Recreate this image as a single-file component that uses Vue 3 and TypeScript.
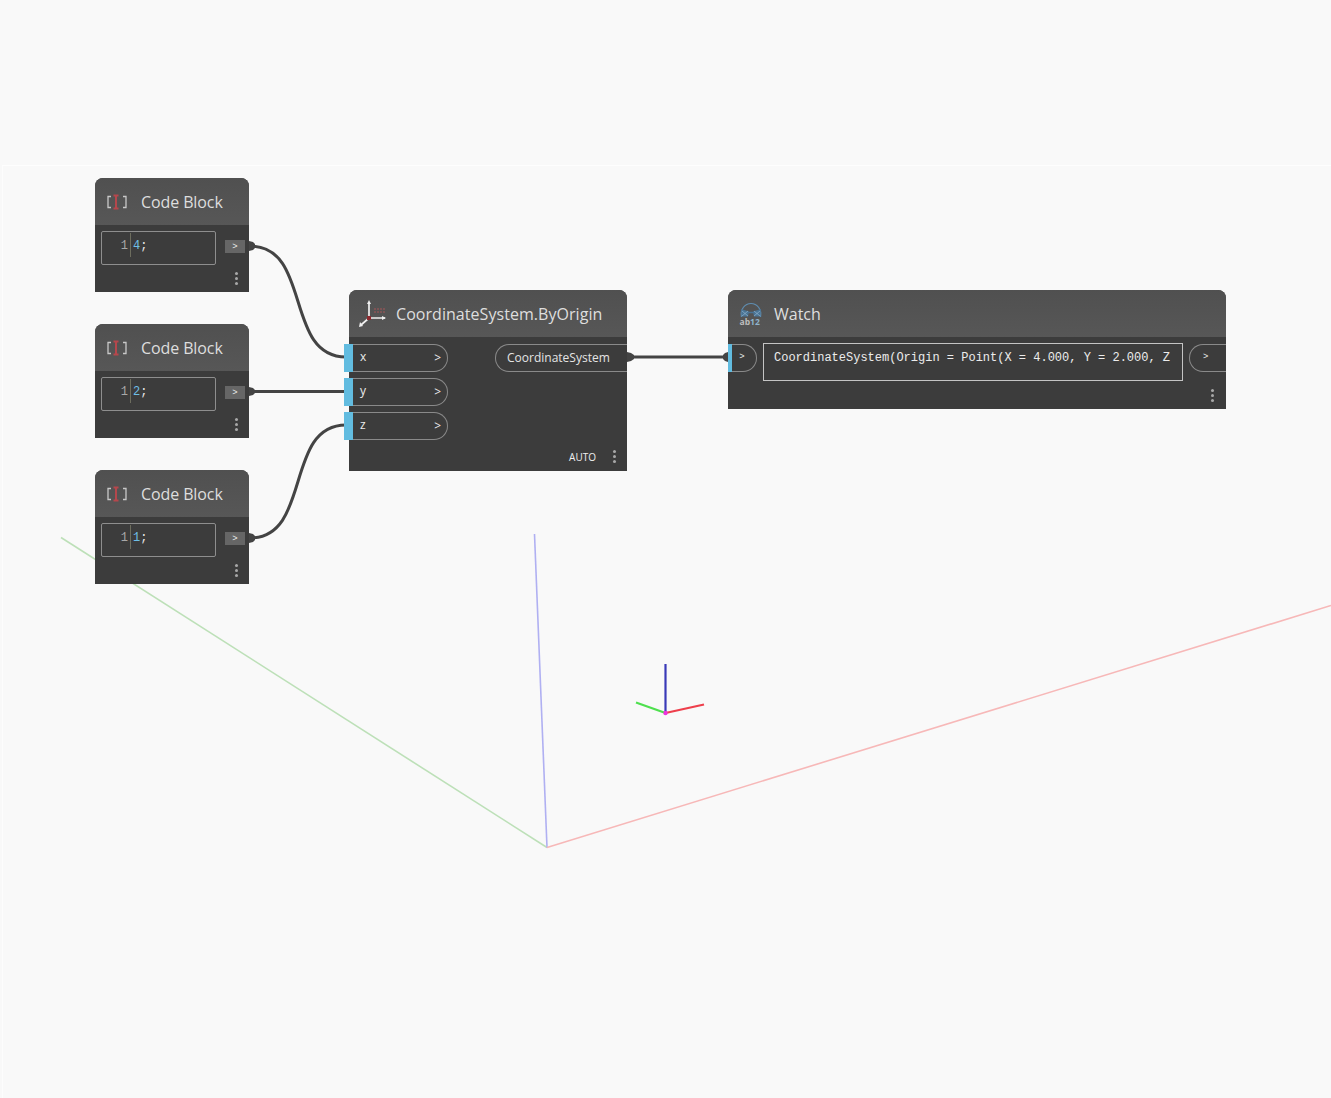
<script setup lang="ts">
interface CodeNode { id: number; top: number; value: string }
const codeNodes: CodeNode[] = [
  { id: 1, top: 178, value: '4' },
  { id: 2, top: 324, value: '2' },
  { id: 3, top: 470, value: '1' },
]
const inputs: string[] = ['x', 'y', 'z']
const watchText = 'CoordinateSystem(Origin = Point(X = 4.000, Y = 2.000, Z'
</script>

<template>
  <div class="canvas">
    <div class="top-band"></div>
    <svg class="scene" width="1331" height="1098" viewBox="0 0 1331 1098">
      <line x1="61" y1="537.500" x2="547" y2="847.500" stroke="#bde0b8" stroke-width="1.600" />
      <line x1="534.500" y1="534" x2="547" y2="847.500" stroke="#b0b0f2" stroke-width="1.600" />
      <line x1="547" y1="847.500" x2="1331" y2="605.500" stroke="#f7b8b8" stroke-width="1.600" />
      <line x1="665.500" y1="713" x2="665.500" y2="664" stroke="#3a3ab8" stroke-width="2.200" />
      <line x1="665.500" y1="713" x2="704" y2="704.500" stroke="#ee3f4c" stroke-width="2.200" />
      <line x1="665.500" y1="713" x2="636" y2="702.500" stroke="#4fe04f" stroke-width="2.200" />
      <circle cx="665.500" cy="713" r="2.200" fill="#ee33dd" />
    </svg>

    <svg class="wires" width="1331" height="1098" viewBox="0 0 1331 1098">
      <g fill="none" stroke="#444" stroke-width="3">
        <path d="M250 246 C312 246 284 357 346 357" />
        <path d="M250 391.500 L346 391.500" />
        <path d="M250 538 C312 538 284 425 346 425" />
        <path d="M628 357 L728 357" />
      </g>
      <g fill="#444">
        <path d="M249 241 L253 242 L255 244 V248 L253 250 L249 251 Z" />
        <path d="M249 387 L253 388 L255 390 V393 L253 395 L249 396 Z" />
        <path d="M249 533 L253 534 L255 536 V540 L253 542 L249 543 Z" />
        <path d="M627 352 L631 353 L634 355 V359 L631 361 L627 362 Z" />
        <path d="M728 352 L725 353 L723 355 V359 L725 361 L728 362 Z" />
      </g>
    </svg>

    <section v-for="n in codeNodes" :key="n.id" class="node code-node" :style="{ top: n.top + 'px' }">
      <header class="head code-head">
        <svg class="code-icon" width="22" height="16" viewBox="0 0 22 16">
          <path d="M5 2.500H2V13.500H5M17 2.500H20V13.500H17" fill="none" stroke="#c8c8c8" stroke-width="1.300" />
          <path d="M7.500 1.500H12.500M10 1.500V14.500M7.500 14.500H12.500" fill="none" stroke="#b5474c" stroke-width="2" />
        </svg>
        <span class="title code-title">Code Block</span>
      </header>
      <div class="code-body">
        <div class="editor">
          <span class="line-no">1</span>
          <span class="gutter"></span>
          <span class="code"><span class="num">{{ n.value }}</span>;</span>
        </div>
        <span class="out-port">&gt;</span>
      </div>
      <footer class="foot code-foot"><i class="dots"></i></footer>
    </section>

    <section class="node main-node">
      <header class="head main-head">
        <svg class="axis-icon" width="28" height="30" viewBox="0 0 28 30">
          <path d="M10 3V19M10 19H26M10 19L2 26" fill="none" stroke="#f0f0f0" stroke-width="1.700" />
          <path d="M8 5L10 1L12 5ZM23 17L27 19L23 21ZM1 23L4 27L0 28Z" fill="#f0f0f0" />
          <rect x="8" y="17" width="4" height="4" fill="#8c2a30" />
          <path d="M15 10H26M15 13H26" stroke="#8a5557" stroke-width="1.500" stroke-dasharray="2 1" />
        </svg>
        <span class="title main-title">CoordinateSystem.ByOrigin</span>
      </header>
      <div class="main-body">
        <div class="inputs">
          <div v-for="name in inputs" :key="name" class="in-port">
            <i class="blue"></i>
            <span class="port-name">{{ name }}</span>
            <span class="chev">&gt;</span>
          </div>
        </div>
        <div class="out-pill">CoordinateSystem</div>
      </div>
      <footer class="foot main-foot"><span class="auto">AUTO</span><i class="dots"></i></footer>
    </section>

    <section class="node watch-node">
      <header class="head watch-head">
        <svg class="watch-icon" width="24" height="24" viewBox="0 0 24 24">
          <path d="M2.500 15C1 7 6 1.500 12 1.500S23 7 21.500 15" fill="none" stroke="#5f8db0" stroke-width="1.200" />
          <path d="M2 7L10 9.500L9 14.500H3ZM22 7L14 9.500L15 14.500H21Z" fill="#4a7394" />
          <path d="M3 9L9 14M9 9L3 14M15 9L21 14M21 9L15 14" stroke="#8fb3cd" stroke-width="0.700" />
          <path d="M9 10.500H15" stroke="#4a7394" stroke-width="1.500" />
          <text x="0.500" y="23" class="ab">ab<tspan fill="#8fb3cd">12</tspan></text>
        </svg>
        <span class="title">Watch</span>
      </header>
      <div class="watch-body">
        <div class="watch-in"><i class="watch-blue"></i><span>&gt;</span></div>
        <div class="watch-box">{{ watchText }}</div>
        <div class="watch-out">&gt;</div>
      </div>
      <footer class="foot watch-foot"><i class="dots"></i></footer>
    </section>
  </div>
</template>

<style scoped>
.canvas {
  position: relative;
  width: 1331px;
  height: 1098px;
  overflow: hidden;
  background: #f9f9f9;
  font-family: "Open Sans", "Noto Sans", sans-serif;
}
.top-band {
  position: absolute;
  left: 2px;
  right: 0;
  top: 165px;
  bottom: 0;
  border-top: 1px solid #fefefe;
  border-left: 1px solid #fdfdfd;
}
.scene, .wires { position: absolute; left: 0; top: 0; }
.node {
  position: absolute;
  display: flex;
  flex-direction: column;
  background: #3c3c3c;
  border-radius: 8px 8px 0 0;
}
.head {
  display: flex;
  align-items: center;
  height: 47px;
  flex: none;
  background: linear-gradient(#505050, #575757);
  border-radius: 8px 8px 0 0;
}
.title { color: #dedede; font-size: 16px; white-space: nowrap; }
.code-title { letter-spacing: -0.100px; }
.main-title { letter-spacing: 0.050px; margin-left: 1px; }
.code-node { left: 95px; width: 154px; height: 114px; }
.code-head { padding-left: 11px; }
.code-icon { margin-right: 13px; flex: none; }
.code-body {
  display: flex;
  align-items: flex-start;
  padding: 6px 4px 0 6px;
  height: 40px;
}
.editor {
  display: flex;
  width: 115px;
  height: 34px;
  box-sizing: border-box;
  border: 1px solid #8e8e8e;
  border-radius: 2px;
  font: 12px/28px "Liberation Mono", monospace;
}
.line-no { width: 26px; text-align: right; color: #a8a8a8; }
.gutter { width: 1px; height: 24px; margin: 1px 2px 0 2px; background: #6d6d5e; }
.code { color: #e8e8e8; }
.num { color: #6fbfe6; }
.out-port {
  width: 20px;
  height: 13px;
  margin: 9px 0 0 9px;
  background: #666;
  color: #ececec;
  font: 9px/15px "Liberation Mono", monospace;
  text-align: center;
}
.foot { display: flex; justify-content: flex-end; align-items: center; flex: 1; }
.dots {
  width: 3px;
  height: 3px;
  border-radius: 50%;
  background: #a8a8a8;
  box-shadow: 0 -5px 0 #a8a8a8, 0 5px 0 #a8a8a8;
}
.code-foot { padding-right: 11px; padding-bottom: 6px; }
.main-node { left: 349px; top: 290px; width: 278px; height: 181px; }
.main-head { padding-left: 10px; }
.axis-icon { margin-right: 8px; flex: none; }
.main-body { display: flex; justify-content: space-between; padding-top: 7px; height: 102px; }
.inputs { display: flex; flex-direction: column; gap: 6px; }
.in-port {
  position: relative;
  display: flex;
  align-items: center;
  justify-content: space-between;
  width: 99px;
  height: 28px;
  box-sizing: border-box;
  padding: 0 6px 3px 11px;
  border: 1px solid #8a8a8a;
  border-left: none;
  border-radius: 0 14px 14px 0;
  color: #ececec;
  font-size: 12px;
}
.blue {
  position: absolute;
  left: -5px;
  top: -1px;
  width: 9px;
  height: 28px;
  background: #62bce0;
}
.port-name { color: #ececec; }
.chev { font-size: 12px; margin-top: 2px; }
.out-pill {
  width: 132px;
  height: 28px;
  box-sizing: border-box;
  padding-left: 11px;
  border: 1px solid #8a8a8a;
  border-right: none;
  border-radius: 14px 0 0 14px;
  color: #e4e4e4;
  font-size: 12px;
  line-height: 25px;
}
.main-foot { padding-right: 11px; padding-bottom: 4px; gap: 17px; }
.auto { color: #efefef; font-size: 10px; }
.watch-node { left: 728px; top: 290px; width: 498px; height: 119px; }
.watch-head { padding-left: 11px; }
.watch-icon { margin-right: 11px; flex: none; }
.ab { font: bold 8.500px "Open Sans", sans-serif; fill: #bdbdbd; }
.watch-body { display: flex; align-items: flex-start; padding-top: 6px; height: 44px; box-sizing: border-box; }
.watch-in {
  position: relative;
  width: 29px;
  height: 28px;
  margin-top: 1px;
  box-sizing: border-box;
  border: 1px solid #8a8a8a;
  border-left: none;
  border-radius: 0 14px 14px 0;
  color: #ececec;
  font: 9px/24px "Liberation Mono", monospace;
  text-align: center;
}
.watch-blue {
  position: absolute;
  left: 0;
  top: -1px;
  width: 4px;
  height: 28px;
  background: #62bce0;
}
.watch-box {
  width: 420px;
  height: 38px;
  margin-left: 6px;
  box-sizing: border-box;
  padding-left: 10px;
  border: 1px solid #c4c4c4;
  color: #ececec;
  font: 12px/28px "Liberation Mono", monospace;
  white-space: nowrap;
  overflow: hidden;
}
.watch-out {
  width: 37px;
  height: 28px;
  margin: 1px 0 0 6px;
  box-sizing: border-box;
  border: 1px solid #8a8a8a;
  border-right: none;
  border-radius: 14px 0 0 14px;
  color: #ececec;
  font: 9px/24px "Liberation Mono", monospace;
  padding-left: 13px;
}
.watch-foot { padding-right: 12px; }
</style>
